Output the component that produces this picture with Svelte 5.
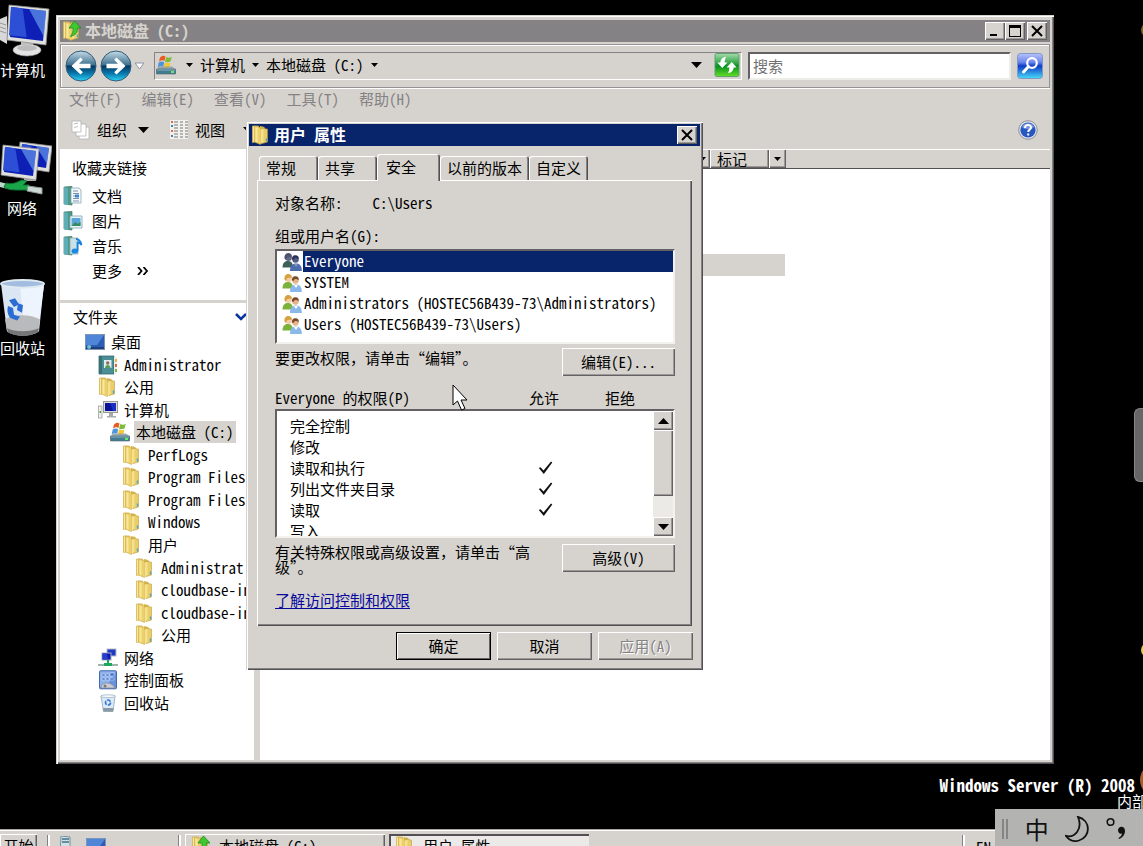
<script>
  const menus = ['文件(F)', '编辑(E)', '查看(V)', '工具(T)', '帮助(H)'];
  const places = [
    { name: '文档', kind: 'doc' },
    { name: '图片', kind: 'pic' },
    { name: '音乐', kind: 'music' }
  ];
  const tree = [
    { name: '桌面', level: 0, icon: 'desktop' },
    { name: 'Administrator', level: 1, icon: 'user' },
    { name: '公用', level: 1, icon: 'folder' },
    { name: '计算机', level: 1, icon: 'computer' },
    { name: '本地磁盘 (C:)', level: 2, icon: 'drive', selected: true },
    { name: 'PerfLogs', level: 3, icon: 'folder' },
    { name: 'Program Files', level: 3, icon: 'folder' },
    { name: 'Program Files', level: 3, icon: 'folder' },
    { name: 'Windows', level: 3, icon: 'folder' },
    { name: '用户', level: 3, icon: 'folder' },
    { name: 'Administrat', level: 4, icon: 'folder' },
    { name: 'cloudbase-in', level: 4, icon: 'folder' },
    { name: 'cloudbase-in', level: 4, icon: 'folder' },
    { name: '公用', level: 4, icon: 'folder' },
    { name: '网络', level: 1, icon: 'network' },
    { name: '控制面板', level: 1, icon: 'panel' },
    { name: '回收站', level: 1, icon: 'bin' }
  ];
  const tabs = ['常规', '共享', '安全', '以前的版本', '自定义'];
  const groups = [
    'Everyone',
    'SYSTEM',
    'Administrators (HOSTEC56B439-73\\Administrators)',
    'Users (HOSTEC56B439-73\\Users)'
  ];
  const permissions = [
    { name: '完全控制', allow: false },
    { name: '修改', allow: false },
    { name: '读取和执行', allow: true },
    { name: '列出文件夹目录', allow: true },
    { name: '读取', allow: true },
    { name: '写入', allow: false }
  ];
  let tab = $state('安全');
  let group = $state('Everyone');
</script>

{#snippet arrow(up = false)}
  <svg class="arrow" width="11" height="6" viewBox="0 0 11 6" aria-hidden="true"><path d={up ? 'M0 6h11L5.5 0z' : 'M0 0h11L5.5 6z'} fill="#000" /></svg>
{/snippet}

{#snippet caret()}
  <svg width="7" height="4" viewBox="0 0 7 4" aria-hidden="true"><path d="M0 0h7L3.500 4z" fill="#000" /></svg>
{/snippet}

{#snippet glyph(kind)}
  <svg width="20" height="20" viewBox="0 0 20 20" aria-hidden="true">
    {#if kind === 'folder' || kind === 'folderup'}
      <path d="M9 1l4.500 1v15L9 19z" fill="#d9b84e" />
      <path d="M11 3l5.500 1.200V17L11 18.500z" fill="#e9cd68" stroke="#bd9c3f" stroke-width=".6" />
      <path d="M1.500 1h6v15l-6 1.500z" fill="#fbe896" stroke="#d2b355" stroke-width=".8" />
      <path d="M3.500 1l6 1.500V19.500l-6-2.500z" fill="#ecd06a" stroke="#c8a648" stroke-width=".6" />
      <path d="M4.500 2.500l2 .5v14.500l-2-.8z" fill="#f8e69a" />
      <path d="M9.500 4.500L12.500 4v13l-3 2z" fill="#f6e08a" />
      <path d="M14.800 13.500h1.400v3h-1.400z" fill="#4aa5c4" />
      {#if kind === 'folderup'}
        <path d="M12.500 0L19 7h-3.500c0 5-2 7-7 8.500 2-3 2.700-5 2.500-8.500H7z" fill="#3fc832" stroke="#1d8a22" stroke-width=".8" />
      {/if}
    {:else if kind === 'desktop'}
      <rect x=".5" y="2.500" width="19" height="15" fill="#2c5cb4" stroke="#7d94b5" />
      <path d="M1 3h18l-7 10H1z" fill="#4f86d8" />
      <path d="M1 15h18v2H1z" fill="#1d3f7e" /><circle cx="4" cy="15" r="2" fill="#5bc0e8" /><circle cx="5" cy="14.500" r=".8" fill="#f5b63a" />
    {:else if kind === 'user'}
      <path d="M1 1h15v18H1z" fill="#4b8e95" stroke="#2f6a70" stroke-width=".8" />
      <path d="M1 1h3v18H1z" fill="#387078" />
      <path d="M16 1.500h2.500V19H16z" fill="#e9efe6" /><path d="M17 4h2v3h-2z" fill="#f1b13b" /><path d="M17 9h2v3h-2z" fill="#df6940" /><path d="M17 14h2v3h-2z" fill="#7bb943" />
      <rect x="6" y="5" width="7.500" height="8" fill="#dfeef3" /><circle cx="9.700" cy="8" r="1.700" fill="#916b4d" /><path d="M7 13c0-4 5.500-4 5.500 0z" fill="#5a9d57" />
    {:else if kind === 'computer'}
      <rect x="5.500" y="1.500" width="14" height="11" fill="#dcdcdc" stroke="#999" /><rect x="7" y="3" width="11" height="8" fill="#1c2fc5" /><path d="M7 3h5l3 8H7z" fill="#0a119b" />
      <path d="M11 13h4v3h3v1.500H9V16h2z" fill="#a8aab0" /><rect x=".5" y="6" width="3.500" height="12" fill="#ececec" stroke="#999" stroke-width=".7" /><path d="M1.500 11h1.500v2H1.500z" fill="#3cb23c" />
    {:else if kind === 'drive'}
      <path d="M4 2.500c2-2 4-2 5.500-1L8.500 6C7 5 5.500 5 3 6.500z" fill="#ec5a24" />
      <path d="M10.300 2c2 1 3.500 1 5.500-.3l-1.200 4.600c-2 1.300-3.800 1.300-5.500.4z" fill="#7abc3b" />
      <path d="M2.700 7.500c2-1.400 4-1.200 5.500-.2l-1 4.500c-1.500-1-3.500-.8-5.500.4z" fill="#4a95dc" />
      <path d="M9 7.600c2 1 3.500 1 5.500-.2l-1.100 4.500c-2 1.200-3.700 1-5.500.2z" fill="#f6c62d" />
      <path d="M3 11.500h13l4 3v4H.5v-4z" fill="#8d9da5" opacity=".85" /><path d="M.5 14h19v5h-19z" fill="#437c8e" stroke="#52646e" stroke-width=".6" /><path d="M1 14.500h18v1H1z" fill="#8fb4c2" /><path d="M15 16h3v2h-3z" fill="#64ea6a" />
    {:else if kind === 'network'}
      <rect x="9" y="1" width="9" height="7" fill="#1b39c4" stroke="#bcbcc6" /><rect x="4" y="5" width="9" height="7" fill="#0c1bab" stroke="#aab" /><path d="M4.500 5.500h4l2 6h-6z" fill="#263dd0" />
      <path d="M9 12h2v3h3v3H6v-3h3z" fill="#1fa85c" /><path d="M0 16h6v2H0zM14 16h6v2h-6z" fill="#9fb5ac" />
    {:else if kind === 'panel'}
      <rect x="1.500" y=".8" width="17" height="18" rx="1" fill="#6992db" stroke="#4469ad" /><path d="M2 1.500h16L8 17H2z" fill="#8db2ed" />
      <path d="M4 4h3v2H4zM8 4h3v2H8zM12 3h4v3h-4zM4 8h3v2H4zM8 8h3v2H8zM12 8h4v2h-4z" fill="#456fc7" stroke="#d9e6fb" stroke-width=".5" />
      <path d="M3 18c0-4 3-5 6-5s7 2 8 5z" fill="#c9ccd2" stroke="#777d88" stroke-width=".6" /><circle cx="7" cy="16" r="1.500" fill="#737b88" />
    {:else if kind === 'bin'}
      <path d="M3 3h14l-2 15.500H5.500z" fill="#dbeaf5" stroke="#a0b6c5" /><path d="M5 15h10.500l-.5 3.500H5.500z" fill="#8a9aa4" /><ellipse cx="10" cy="3.200" rx="7.500" ry="1.400" fill="#f4fafe" stroke="#96adba" stroke-width=".7" /><circle cx="10" cy="9.500" r="2.500" fill="none" stroke="#3678d8" stroke-width="1.700" stroke-dasharray="4 1.200" />
    {:else}
      <path d="M1 1l8-.5V19l-8-1z" fill="#4c9982" stroke="#377665" stroke-width=".7" /><path d="M1 1l4 1v17l-4-1z" fill="#5faeb7" />
      {#if kind === 'doc'}
        <path d="M8 2h8l2 2v13H8z" fill="#f4f8fb" stroke="#8ba6b5" stroke-width=".8" /><path d="M10 5h5M10 7.500h6M10 10h2M10 12.500h6M10 15h6" stroke="#7b97b0" /><path d="M12 8.500h4v3h-4z" fill="#3f82cf" />
      {:else if kind === 'pic'}
        <path d="M7 5h12v12H7z" fill="#e9f5fa" stroke="#7fa1b0" stroke-width=".8" /><path d="M8.500 7h9v8h-9z" fill="#58a6d7" /><path d="M8.500 15l4-4 2 2 3-2v4z" fill="#38885d" />
      {:else}
        <path d="M7 2h8v16H7z" fill="#cce0e7" stroke="#8caab4" stroke-width=".8" /><path d="M13 3c2 0 5 2 5.500 6-1-2-2.500-2.500-4-2.500V15" fill="none" stroke="#1684dd" stroke-width="1.800" /><ellipse cx="11.800" cy="15" rx="3.300" ry="2.600" fill="#1989e4" />
      {/if}
    {/if}
  </svg>
{/snippet}

{#snippet people(dark)}
  <svg width="20" height="20" viewBox="0 0 20 20" aria-hidden="true">
    <path d="M.5 15.500c0-5 2.500-6.500 5.500-6.500s5 2 5 6.500z" fill={dark ? '#3d6058' : '#7bb23c'} />
    <circle cx="6.500" cy="5.500" r="3.400" fill={dark ? '#626785' : '#f2cda5'} /><path d="M2.500 6.500C2 2 5 .5 7.500 1.200 10 2 10 4 9.500 5 7 5 5 3.500 4 8z" fill={dark ? '#4c5270' : '#d6a13f'} />
    <circle cx="13.500" cy="7.500" r="3.200" fill={dark ? '#515a82' : '#e5b48c'} /><path d="M10 7.500C9.500 4 12 2.800 14 3.200c3 .5 3 3 2.500 4-2-1.700-4-1.700-5 .8z" fill={dark ? '#2c3358' : '#7b4b2c'} />
    <path d="M8 19c0-5.500 2.500-7.500 6-7.500 4 0 5.800 2.500 5.800 7.500z" fill={dark ? '#4b6cad' : '#8ab8eb'} /><path d="M12 12l2 3 2-3z" fill={dark ? '#8593bd' : '#fff'} />
  </svg>
{/snippet}

{#snippet monitor(x, y, w, h)}
  <path d="M{x} {y}l{w} 4-3 {h}-{w - 1}-5z" fill="#e0e0dc" stroke="#8e8e8e" stroke-width=".8" />
  <path d="M{x + 2} {y + 2}l{w - 5} 4-3 {h - 6}-{w - 7}-4z" fill="#0d1fb4" />
  <path d="M{x + 2} {y + 2}l{(w - 5) / 3} 1.300 4 {h - 7}-{(w - 5) / 3 + 6}-2z" fill="#2c4fd6" />
  <path d="M{x + w / 2} {y + 4}l{w / 2 - 3} 2-2 {h - 10}z" fill="#5f92ea" opacity=".75" />
{/snippet}

<div class="page">
  <main class="desktop">
    <div class="shortcuts">
      <a class="shortcut" href="#computer">
        <svg width="52" height="56" viewBox="0 0 52 56" aria-hidden="true">
          <path d="M0 16l7-3v28l-7-4z" fill="#d8d8d8" /><path d="M0 20l6 2M0 24l6 2M0 28l6 2" stroke="#999" />
          <path d="M21 37h12v9H21z" fill="#c8c8c8" /><ellipse cx="27" cy="47" rx="14" ry="6" fill="#e3e3e3" stroke="#999" stroke-width=".6" /><ellipse cx="27" cy="45" rx="10" ry="3" fill="#bcbcbc" />
          {@render monitor(9, 2, 40, 36)}
        </svg>
        <span>计算机</span>
      </a>
      <a class="shortcut net" href="#network">
        <svg width="52" height="56" viewBox="0 0 52 56" aria-hidden="true">
          {@render monitor(20, 1, 32, 26)}
          <path d="M24 31h12v9H24z" fill="#ababab" />
          {@render monitor(3, 4, 36, 31)}
          <path d="M0 41l12 3v5L0 46z" fill="#b9d8c8" /><path d="M6 42c7 2 11-1 16-3l5 1-4 4h6v5H16c-5 0-9-1-12-3z" fill="#19a64a" stroke="#0d7433" /><path d="M28 45l14 2v6l-15-3z" fill="#ccd8d3" stroke="#8a9691" />
        </svg>
        <span>网络</span>
      </a>
      <a class="shortcut" href="#bin">
        <svg width="46" height="58" viewBox="0 0 46 60" preserveAspectRatio="none" aria-hidden="true">
          <path d="M1 5l43 0-5 49c-8 6-24 6-32 0z" fill="#dbe6f5" /><path d="M20 7h24l-5 38H24z" fill="#eef4fd" /><path d="M5 42c8-6 26-6 35 0l-2 12c-8 6-23 6-31 0z" fill="#b9babb" /><path d="M7 51c8 4 23 4 32 0l-1 4c-8 5-22 5-30 0z" fill="#757677" />
          <ellipse cx="22.500" cy="5" rx="21.500" ry="4" fill="#a2bde0" stroke="#dfe9f0" stroke-width="2" />
          <path d="M9 22l6-2 4 6-5 3zM18 25l5 2-1 8-5-3zM8 28l5 2 1 7 6 2-3 4-7-3c-3-4-3-8-2-12z" fill="#2b6dd3" />
        </svg>
        <span>回收站</span>
      </a>
    </div>

    <div class="build"><strong>Windows Server (R) 2008</strong><span>内部</span></div>
    <i class="dot olive"></i><i class="dot yellow"></i><i class="dot orange"></i><i class="handle"></i>

    <section class="window explorer" aria-label="本地磁盘 (C:)">
      <header class="title inactive">
        {@render glyph('folderup')}
        <h1>本地磁盘 (C:)</h1>
        <div class="caption">
          <button class="raised" aria-label="最小化"><svg width="12" height="12" viewBox="0 0 12 12"><path d="M1 9h7v2H1z" /></svg></button>
          <button class="raised" aria-label="最大化"><svg width="12" height="12" viewBox="0 0 12 12"><path fill-rule="evenodd" d="M0 0h12v12H0zM1 3v8h10V3z" /></svg></button>
          <button class="raised close" aria-label="关闭"><svg width="12" height="12" viewBox="0 0 12 12"><path d="M1 1l10 10M11 1L1 11" stroke="#000" stroke-width="2" /></svg></button>
        </div>
      </header>

      <div class="nav">
        <div class="travel">
          {#each ['后退', '前进'] as label, i}
            <button class="round" aria-label={label}>
              <svg width="32" height="32" viewBox="0 0 32 32">
                <defs><linearGradient id="orb{i}" x2="0" y2="1"><stop stop-color="#c5dbe6" /><stop offset=".46" stop-color="#40728f" /><stop offset=".5" stop-color="#07385e" /><stop offset=".75" stop-color="#0878ad" /><stop offset="1" stop-color="#2cd3f5" /></linearGradient></defs>
                <circle cx="16" cy="16" r="15" fill="url(#orb{i})" stroke="#315d7c" />
                <path transform={i ? 'rotate(180 16 16)' : ''} d="M6.500 16l9-8.500 2.300 2.300-3.800 3.900H25.500v4.600H14l3.800 3.900-2.300 2.300z" fill="#fff" />
              </svg>
            </button>
          {/each}
          <button class="plain" aria-label="最近的页面"><svg width="11" height="8" viewBox="0 0 11 8"><path d="M1 1h9L5.500 7z" fill="#fff" stroke="#8d94a8" /></svg></button>
        </div>
        <div class="address">
          {@render glyph('drive')}
          {@render caret()}<button class="plain">计算机</button>
          {@render caret()}<button class="plain">本地磁盘 (C:)</button>
          {@render caret()}
          <button class="plain drop" aria-label="地址列表">{@render arrow()}</button>
          <button class="plain" aria-label="刷新">
            <svg width="26" height="24" viewBox="0 0 26 25"><defs><linearGradient id="go" x2="0" y2="1"><stop stop-color="#a4dcae" /><stop offset=".45" stop-color="#28a13b" /><stop offset=".55" stop-color="#069020" /><stop offset="1" stop-color="#65df27" /></linearGradient></defs>
              <rect x=".5" y=".5" width="25" height="24" rx="2" fill="url(#go)" stroke="#5e9e6b" /><path d="M12 4C8 4.500 6.500 7 6 10H3l5 5.500 5.500-5.500h-3c0-2 .5-4 1.500-6zM14 21c4-.5 5.500-3 6-6h3l-5-5.500L12.500 15h3c0 2-.5 4-1.500 6z" fill="#fff" /></svg>
          </button>
        </div>
        <input class="search" type="search" placeholder="搜索" aria-label="搜索" />
        <button class="plain" aria-label="开始搜索">
          <svg width="26" height="26" viewBox="0 0 26 26"><defs><linearGradient id="find" x2="0" y2="1"><stop stop-color="#b8c3fa" /><stop offset=".35" stop-color="#6b86ed" /><stop offset=".5" stop-color="#0e3bc7" /><stop offset="1" stop-color="#49dbf7" /></linearGradient></defs>
            <rect x=".5" y=".5" width="25" height="25" rx="3" fill="url(#find)" stroke="#7e98c8" /><circle cx="15" cy="10" r="4.800" fill="none" stroke="#fff" stroke-width="2.200" /><path d="M11.500 13.500L6.500 19" stroke="#fff" stroke-width="3" stroke-linecap="round" /></svg>
        </button>
      </div>

      <nav class="menu">{#each menus as item}<button class="plain">{item}</button>{/each}</nav>

      <div class="tools">
        <button class="plain">
          <svg width="20" height="20" viewBox="0 0 20 20" aria-hidden="true"><g fill="#fff" stroke="#b3b3b3" stroke-width=".8"><path d="M8 7h10v12H8z" /><path d="M5 4h10v12H5z" /><path d="M1 1h9v11H1z" /></g><path d="M3 4l4-1M3 8l4-2" stroke="#bbb" /></svg>
          组织 {@render arrow()}
        </button>
        <button class="plain view">
          <svg width="18" height="20" viewBox="0 0 18 20" aria-hidden="true"><rect width="18" height="19" fill="#f1f1ee" /><path d="M4 2h4M4 5h4M4 8h4M4 11h4M4 14h4M4 17h4M10 2h3M10 5h3M10 8h3M10 11h3M10 14h3M10 17h3M15 2h3M15 5h3M15 8h3M15 11h3M15 14h3M15 17h3" stroke="#777" /><path d="M1 2h2M1 11h2" stroke="#e06a5a" stroke-width="2" /><path d="M1 6h2M1 16h2" stroke="#5278be" stroke-width="2" /></svg>
          视图 {@render arrow()}
        </button>
        <button class="plain help" aria-label="帮助">
          <svg width="20" height="20" viewBox="0 0 20 20"><circle cx="10" cy="10" r="9.300" fill="#dce0e8" stroke="#8f929a" /><circle cx="10" cy="10" r="7.600" fill="#2857c2" /><path d="M4 7c1-5 11-5 12 0-2 3-10 3-12 0z" fill="#7294e0" /><path d="M7 8c0-4 6-4 6-.5 0 2.300-2.800 2-2.800 4.500" fill="none" stroke="#fff" stroke-width="2" /><rect x="9.200" y="13.500" width="2" height="2" fill="#fff" /></svg>
        </button>
      </div>

      <div class="body">
        <aside>
          <div class="favorites">
            <h2>收藏夹链接</h2>
            {#each places as place}<button class="plain">{@render glyph(place.kind)}<span>{place.name}</span></button>{/each}
            <button class="plain more"><span>更多</span>
              <svg width="12" height="8" viewBox="0 0 12 8" aria-hidden="true"><path d="M1 0l3.500 4L1 8M6.500 0L10 4 6.500 8" fill="none" stroke="#000" stroke-width="1.800" /></svg>
            </button>
          </div>
          <div class="folders">
            <h2>文件夹 <svg width="12" height="8" viewBox="0 0 12 8" aria-hidden="true"><path d="M1 1l5 5 5-5" fill="none" stroke="#08369c" stroke-width="2.500" /></svg></h2>
            <ul>
              {#each tree as node}
                <li class="level{node.level}"><button class="plain" class:selected={node.selected}>{@render glyph(node.icon)}<span>{node.name}</span></button></li>
              {/each}
            </ul>
          </div>
        </aside>
        <div class="files">
          <div class="columns">
            <button class="raised name" aria-label="名称"></button><button class="raised small" aria-label="筛选">{@render caret()}</button>
            <button class="raised tag">标记</button><button class="raised pick" aria-label="筛选标记">{@render caret()}</button>
          </div>
          <div class="picked"></div>
        </div>
      </div>
    </section>

    <section class="window dialog" role="dialog" aria-label="用户 属性">
      <header class="title active">
        {@render glyph('folder')}
        <h1>用户 属性</h1>
        <div class="caption"><button class="raised" aria-label="关闭对话框"><svg width="12" height="12" viewBox="0 0 12 12"><path d="M1 1l10 10M11 1L1 11" stroke="#000" stroke-width="2" /></svg></button></div>
      </header>
      <div class="tabs" role="tablist">
        {#each tabs as name}<button role="tab" aria-selected={tab === name} class:current={tab === name} onclick={() => (tab = name)}>{name}</button>{/each}
      </div>
      <div class="sheet" role="tabpanel">
        <div class="object"><span>对象名称:</span><span>C:\Users</span></div>
        <h2 id="groups">组或用户名(G):</h2>
        <ul class="sunken groups" role="listbox" aria-labelledby="groups">
          {#each groups as name}
            <li role="option" aria-selected={group === name}><button class="plain" class:on={group === name} onclick={() => (group = name)}>{@render people(group === name)}<span>{name}</span></button></li>
          {/each}
        </ul>
        <div class="action"><p>要更改权限，请单击“编辑”。</p><button class="raised push">编辑(E)...</button></div>
        <div class="heads"><h2 id="perms">{group} 的权限(P)</h2><span>允许</span><span>拒绝</span></div>
        <div class="sunken perms">
          <div class="scroller">
            <table aria-labelledby="perms"><tbody>
              {#each permissions as row}
                <tr><th scope="row">{row.name}</th><td>{#if row.allow}<svg width="15" height="14" viewBox="0 0 15 14" role="img" aria-label="允许"><path d="M.8 7L2.500 6.300 5.500 9.500 13 .5 14.300 1.500 5.800 13z" fill="#111" /></svg>{/if}</td><td></td></tr>
              {/each}
            </tbody></table>
          </div>
          <div class="bar">
            <button class="raised" aria-label="向上滚动">{@render arrow(true)}</button>
            <div class="raised thumb"></div>
            <button class="raised end" aria-label="向下滚动">{@render arrow()}</button>
          </div>
        </div>
        <div class="action advanced"><p>有关特殊权限或高级设置，请单击“高级”。</p><button class="raised push">高级(V)</button></div>
        <a class="learn" href="#permissions">了解访问控制和权限</a>
      </div>
      <footer><button class="raised default">确定</button><button class="raised">取消</button><button class="raised" disabled>应用(A)</button></footer>
    </section>

    <svg class="pointer" width="18" height="28" viewBox="0 0 18 28" aria-hidden="true"><path d="M1 1v20l4.500-4 4 9 3.500-1.500-4-8.500h6z" fill="#fff" stroke="#000" /></svg>
  </main>

  <footer class="taskbar">
    <button class="raised start">开始</button>
    <i class="rule"></i>
    <button class="plain quick" aria-label="服务器管理器"><svg width="14" height="20" viewBox="0 0 14 20"><path d="M3 0l9 1v18H2z" fill="#d1e1e6" stroke="#78909c" /><path d="M4 3h7M4 6h7" stroke="#3f738a" stroke-width="1.500" /></svg></button>
    <button class="plain show" aria-label="显示桌面">{@render glyph('desktop')}</button>
    <i class="rule last"></i>
    <button class="raised task">{@render glyph('folderup')}本地磁盘 (C:)</button>
    <button class="task pressed">{@render glyph('folder')}用户 属性</button>
    <i class="rule tray"></i><span class="lang">EN</span>
  </footer>

  <div class="ime">
    <i></i>
    <span>中</span>
    <svg width="24" height="26" viewBox="0 0 24 26" role="img" aria-label="半角"><path d="M13 1c13 3 13 20 1 23.500C9 26 4 24 1 20c9 2 17-7 12-19z" fill="none" stroke="#111" stroke-width="1.800" /></svg>
    <svg width="20" height="24" viewBox="0 0 20 24" role="img" aria-label="中文标点"><circle cx="4.500" cy="5" r="3.300" fill="none" stroke="#111" stroke-width="1.600" /><path d="M12 13c0-4 7-5 7 1 0 4-3 7-6 8l-.5-1c2-1 3.500-3 3.500-4.500-2 1-4-1-4-3.500z" fill="#111" /></svg>
  </div>
</div>

<style>
  :global(body) { background: #000; }
  .page, .page * { box-sizing: border-box; }
  .page { position: relative; display: flex; flex-direction: column; height: 100vh; min-height: 700px; overflow: hidden; background: #000; color: #000; font: 15px/20px "Noto Sans Mono CJK SC", "Noto Sans CJK SC", monospace; }
  .page svg { flex: none; display: block; }
  button, input { font: inherit; color: inherit; margin: 0; padding: 0; border: 0; border-radius: 0; white-space: nowrap; }
  h1, h2, p, ul { margin: 0; padding: 0; font-weight: 400; font-size: 15px; list-style: none; }
  .plain { background: none; display: flex; align-items: center; }
  .raised { background: #d6d3ce; box-shadow: inset 1px 1px #fff, inset -1px -1px #636163, inset -2px -2px #9c9a98; display: flex; align-items: center; justify-content: center; }
  .sunken { background: #fff; border: 2px solid; border-color: #636163 #f4f2ee #f4f2ee #636163; }
  .desktop { position: relative; flex: 1; min-height: 0; }

  .shortcuts { display: flex; flex-direction: column; gap: 61px; width: 52px; padding-top: 3px; color: #fff; }
  .shortcut { display: flex; flex-direction: column; gap: 1px; width: 52px; color: #fff; text-decoration: none; }
  .shortcut.net span { padding-left: 7px; }
  .build { position: absolute; right: 0; bottom: 20px; display: flex; flex-direction: column; align-items: flex-end; color: #fff; line-height: 16px; }
  .build strong { font-size: 17px; padding-right: 8px; }
  .build span { width: 26px; white-space: nowrap; }
  .dot { position: absolute; border-radius: 50%; width: 14px; height: 14px; right: -12px; top: 23px; background: #7b681d; }
  .dot.yellow { top: 643px; background: #e9cf26; }
  .dot.orange { top: 763px; width: 34px; height: 34px; right: -31px; background: #a85f2b; }
  .handle { position: absolute; right: 0; top: 408px; width: 9px; height: 74px; border-radius: 6px 0 0 6px; background: #666; border: 1px solid #888; border-right: 0; }

  .window { position: absolute; background: #d6d3ce; box-shadow: inset 1px 1px #d6d3ce, inset 2px 2px #fff, inset -1px -1px #525052, inset -2px -2px #848284; }
  .explorer { left: 56px; top: 15px; width: calc(100% - 145px); height: calc(100% - 80px); display: flex; flex-direction: column; padding: 5px 4px 4px; }
  .title { display: flex; align-items: center; height: 22px; padding-left: 2px; }
  .title h1 { font-size: 16px; font-weight: 700; padding: 0 0 3px 3px; }
  .inactive { background: #848284; color: #d6d3ce; }
  .active { background: #08246b; color: #fff; }
  .caption { display: flex; margin-left: auto; padding-right: 3px; }
  .caption button { width: 20px; height: 18px; }
  .caption .close { margin-left: 2px; }

  .nav { display: flex; align-items: center; gap: 6px; height: 44px; margin-top: 2px; padding: 0 6px 0 4px; border: 1px solid #949294; box-shadow: inset 1px 1px #fff, 0 1px #fff; }
  .travel { display: flex; align-items: center; gap: 3px; width: 83px; }
  .travel .plain { margin-left: -1px; }
  .round { background: none; width: 32px; height: 32px; }
  .address { flex: 1; display: flex; align-items: center; gap: 7px; height: 28px; padding: 0 1px 2px; border: 1px solid; border-color: #848284 #fff #fff #848284; }
  .address > :global(svg:first-child) { margin-right: 3px; }
  .address > .plain:not(.drop) { padding-bottom: 1px; }
  .drop { margin-left: auto; margin-right: 5px; }
  .search { width: 263px; height: 28px; padding: 0 3px 2px; background: #fff; border: 2px solid; border-color: #636163 #eeece8 #eeece8 #636163; outline: 0; }
  .search::placeholder { color: #737173; opacity: 1; }
  .menu { display: flex; gap: 20px; padding: 1px 9px 3px; color: #848284; height: 24px; }
  .tools { display: flex; align-items: center; height: 37px; padding: 0 12px 2px 11px; }
  .tools .plain { gap: 6px; }
  .tools :global(.arrow) { margin-left: 5px; }
  .tools .view { margin-left: 21px; gap: 7px; }
  .tools .view :global(.arrow) { margin-left: 11px; }
  .tools .help { margin-left: auto; }

  .body { flex: 1; min-height: 0; display: flex; gap: 6px; }
  aside { width: 194px; background: #fff; overflow: hidden; white-space: nowrap; }
  .favorites { height: 154px; padding: 9px 3px 0; border-bottom: 3px solid #d6d3ce; }
  .favorites h2 { padding: 0 9px; height: 25px; }
  .favorites button { height: 25px; gap: 9px; }
  .favorites .more { padding-left: 29px; gap: 15px; }
  .folders h2 { display: flex; align-items: center; justify-content: space-between; padding: 0 7px 0 13px; height: 28px; }
  .folders ul { display: grid; grid-auto-rows: 1fr; height: 383px; }
  .folders li { display: flex; align-items: center; padding-left: 25px; }
  .folders .level1 { padding-left: 38px; }
  .folders .level2 { padding-left: 50px; }
  .folders .level3 { padding-left: 62px; }
  .folders .level4 { padding-left: 75px; }
  .folders button { gap: 4px; height: 22px; }
  .folders span { padding: 0 2px; line-height: 22px; }
  .folders .selected span { background: #d6d3ce; }
  .files { flex: 1; min-width: 0; background: #fff; }
  .columns { display: flex; height: 20px; background: #d6d3ce; border-bottom: 1px solid #525052; box-shadow: inset 0 1px #fff; }
  .columns button { justify-content: flex-start; padding-left: 7px; }
  .columns .name { width: 432px; }
  .columns .small { width: 18px; }
  .columns .tag { width: 59px; }
  .columns .pick { width: 17px; padding-left: 5px; }
  .picked { width: 525px; height: 22px; margin-top: 85px; background: #d6d3ce; }

  .dialog { left: 246px; top: 121px; width: 457px; padding: 3px 3px 10px; }
  .dialog .title { height: 22px; }
  .tabs { display: flex; align-items: flex-end; padding: 8px 9px 0 10px; height: 34px; }
  .tabs button { height: 24px; padding: 0 7px; background: #d6d3ce; border-radius: 3px 3px 0 0; box-shadow: inset 1px 1px #fff, inset -1px 0 #525052, inset -2px 0 #848284; }
  .tabs button:nth-child(-n+2) { padding-right: 22px; }
  .tabs .current { height: 27px; padding: 0 24px 2px 9px; margin-bottom: -1px; position: relative; }
  .sheet { margin: 0 8px; padding: 13px 17px 16px 18px; box-shadow: inset 1px 1px #fff, inset -1px -1px #525052, inset -2px -2px #848284; }
  .object { display: flex; gap: 30px; }
  .sheet > h2 { margin-top: 13px; height: 23px; }
  .groups { height: 95px; padding: 0 0 0 5px; }
  .groups button { width: 100%; height: 21px; gap: 1px; }
  .groups span { flex: 1; text-align: left; padding-left: 1px; height: 21px; }
  .groups .on span { background: #08246b; color: #fff; }
  .action { display: flex; align-items: flex-start; justify-content: space-between; margin-top: 4px; }
  .push { width: 113px; height: 28px; }
  .action p { width: 258px; }
  .heads { display: flex; margin-top: 12px; height: 21px; }
  .heads h2 { width: 254px; }
  .heads span { width: 76px; }
  .heads span:last-child { width: auto; }
  .perms { display: flex; height: 129px; }
  .scroller { flex: 1; overflow: hidden; padding-top: 4px; }
  table { border-collapse: collapse; }
  th, td { height: 21px; padding: 0; font-weight: 400; text-align: left; line-height: 21px; }
  th { width: 261px; padding-left: 13px; }
  td { width: 57px; }
  .bar { width: 20px; display: flex; flex-direction: column; background: #eceae6; }
  .bar button { height: 19px; }
  .bar .thumb { height: 66px; }
  .bar .end { margin-top: auto; }
  .advanced { margin-top: 6px; }
  .advanced p { line-height: 15px; }
  .learn { display: block; width: max-content; margin-top: 16px; color: #08089c; text-underline-offset: 2px; }
  .dialog footer { display: flex; justify-content: flex-end; gap: 6px; padding: 6px 7px 0 0; }
  .dialog footer button { width: 95px; height: 28px; }
  .dialog footer .default { box-shadow: inset 0 0 0 1px #000, inset 2px 2px #fff, inset -2px -2px #636163; }
  .dialog footer button:disabled { color: #848284; text-shadow: 1px 1px #fff; }
  .pointer { position: absolute; left: 452px; top: 384px; }

  .taskbar { flex: none; display: flex; align-items: flex-start; height: 17px; overflow: hidden; padding: 5px 0 0; background: #d6d3ce; box-shadow: inset 0 1px #a5a2a0, inset 0 2px #fff; }
  .taskbar button { height: 24px; flex: none; }
  .start { width: 37px; }
  .rule { width: 3px; height: 24px; margin: 1px 8px 0 10px; background: #fff; border-left: 1px solid #848284; }
  .quick { margin-right: 14px; }
  .show { margin-right: 72px; }
  .rule.last { margin: 1px 4px 0 0; }
  .task { width: 200px; gap: 8px; padding-left: 6px; justify-content: flex-start; margin-right: 4px; }
  .pressed { display: flex; align-items: center; background: #eceae8; box-shadow: inset 2px 2px #525052; }
  .rule.tray { margin: 1px 11px 0 auto; }
  .lang { width: 167px; line-height: 26px; }
  .ime { position: absolute; right: 0; bottom: 0; display: flex; align-items: center; justify-content: space-between; width: 148px; height: 37px; padding: 3px 17px 0 7px; background: #b3b3b2; color: #111; }
  .ime i { width: 6px; height: 20px; border: 2px solid #858585; border-width: 0 2px; }
  .ime span { font-size: 24px; line-height: 30px; }
</style>
